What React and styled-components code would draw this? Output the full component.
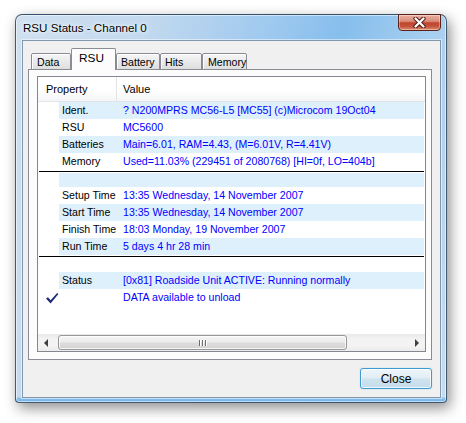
import React from 'react';
import styled, { createGlobalStyle } from 'styled-components';

const GlobalStyle = createGlobalStyle`
  html, body {
    margin: 0;
    background: #ffffff;
  }
  body {
    font-family: "Liberation Sans", Arial, sans-serif;
  }
`;

const Desktop = styled.div`
  width: 466px;
  height: 423px;
  box-sizing: border-box;
  padding: 14px 0 0 15px;
`;

const Window = styled.div`
  width: 432px;
  height: 389px;
  box-sizing: border-box;
  display: flex;
  flex-direction: column;
  padding: 0 5px 4px 6px;
  border: 1px solid rgba(38, 56, 76, 0.8);
  border-radius: 7px 7px 4px 4px;
  background:
    linear-gradient(to top, #6cb1ea 0, #8cc2ee 4px, transparent 5px),
    linear-gradient(105deg, #cfe0f0 0%, #c2d9ef 25%, #9fc9ef 48%, #86beec 62%, #a6cef0 78%, #c7dcf0 100%);
  box-shadow: 3px 5px 14px rgba(0, 0, 0, 0.45), inset 0 0 0 1px rgba(255, 255, 255, 0.55);
`;

const TitleBar = styled.div`
  height: 25px;
  display: flex;
  justify-content: space-between;
  align-items: flex-start;
`;

const Title = styled.span`
  padding: 6px 0 0 1px;
  font-size: 11.6px;
  color: #000;
  text-shadow: 0 0 6px #fff, 0 0 3px #fff;
`;

const CaptionClose = styled.div`
  width: 43px;
  height: 17px;
  margin-top: -1px;
  box-sizing: border-box;
  display: flex;
  align-items: center;
  justify-content: center;
  border: 1px solid #5a2219;
  border-radius: 0 0 4px 4px;
  background: linear-gradient(#eab0a2 0%, #d98b79 42%, #c24530 52%, #c4513a 75%, #df8f70 100%);
  box-shadow: inset 0 0 0 1px rgba(255, 255, 255, 0.35);
`;

const Client = styled.div`
  flex: 1;
  display: flex;
  flex-direction: column;
  padding: 8px 8px 8px 5px;
  background: #f0f0f0;
  border: 1px solid #8297ad;
  box-shadow: 0 0 0 1px rgba(255, 255, 255, 0.5);
`;

const TabStrip = styled.div`
  position: relative;
  z-index: 1;
  height: 21px;
  margin-bottom: -1px;
  padding-left: 3px;
  display: flex;
  align-items: flex-end;
`;

const Tab = styled.div`
  width: ${p => p.w}px;
  height: ${p => (p.active ? 22 : 17)}px;
  box-sizing: border-box;
  padding-left: ${p => p.pad}px;
  display: flex;
  align-items: center;
  font-size: ${p => (p.active ? 11.8 : 10.6)}px;
  color: #000;
  white-space: nowrap;
  border: 1px solid #898c95;
  border-bottom: ${p => (p.active ? 'none' : '1px solid #898c95')};
  border-radius: 2px 2px 0 0;
  background: ${p =>
    p.active ? '#fcfcfc' : 'linear-gradient(#f6f6f6, #ebebeb 45%, #dedede)'};
  box-shadow: ${p => (p.active ? 'none' : 'inset 0 1px 0 #fff, inset 1px 0 0 #fff')};
  padding-bottom: ${p => (p.active ? 3 : 0)}px;
`;

const Panel = styled.div`
  height: 291px;
  box-sizing: border-box;
  display: flex;
  flex-direction: column;
  padding: 6px 5px 7px 8px;
  border: 1px solid #898c95;
  background: #fcfcfc;
`;

const ListView = styled.div`
  flex: 1;
  display: flex;
  flex-direction: column;
  border: 1px solid #828790;
  background: #fff;
  font-size: 10.6px;
`;

const Header = styled.div`
  height: 25px;
  box-sizing: border-box;
  display: flex;
  border-bottom: 1px solid #e3e4e6;
  background: linear-gradient(#ffffff 0%, #ffffff 55%, #f4f5f7 100%);
`;

const HeadCell = styled.div`
  width: ${p => (p.w ? `${p.w}px` : 'auto')};
  flex: ${p => (p.w ? 'none' : 1)};
  box-sizing: border-box;
  padding-left: ${p => p.pad}px;
  display: flex;
  align-items: center;
  font-size: 11px;
  color: #000;
  border-right: ${p => (p.w ? '1px solid #e3e4e6' : 'none')};
`;

const Row = styled.div`
  height: 17px;
  display: flex;
  line-height: 17px;
`;

const IconCell = styled.div`
  width: 21px;
  flex: none;
  padding: 3px 0 0 8px;
  box-sizing: border-box;
`;

const Band = styled.div`
  flex: 1;
  display: flex;
  margin-right: 1px;
  background: ${p => (p.striped ? '#dff0fd' : 'transparent')};
`;

const PropCell = styled.span`
  width: 64px;
  flex: none;
  box-sizing: border-box;
  padding-left: 3px;
  color: #000;
  white-space: nowrap;
`;

const ValueCell = styled.span`
  flex: 1;
  color: #0000ff;
  white-space: nowrap;
`;

const SepRow = styled.div`
  height: 17px;
  display: flex;
  flex-direction: column;
`;

const SepLine = styled.div`
  height: 1px;
  margin: 1px;
  background: #000;
`;

const SepBand = styled.div`
  flex: 1;
  margin: 0 1px 0 21px;
  background: ${p => (p.striped ? '#dff0fd' : 'transparent')};
`;

const Spacer = styled.div`
  flex: 1;
`;

const ScrollBar = styled.div`
  height: 17px;
  display: flex;
  align-items: center;
  background: linear-gradient(#e9e9e9, #f3f3f3 30%, #f3f3f3 70%, #ebebeb);
`;

const ArrowButton = styled.div`
  width: 17px;
  height: 17px;
  flex: none;
  display: flex;
  align-items: center;
  justify-content: center;
`;

const Arrow = styled.div`
  width: 0;
  height: 0;
  border-top: 4px solid transparent;
  border-bottom: 4px solid transparent;
  ${p =>
    p.dir === 'left'
      ? 'border-right: 4px solid #3f3f3f; margin-left: -1px;'
      : 'border-left: 4px solid #3f3f3f; margin-left: 1px;'}
`;

const Track = styled.div`
  flex: 1;
  height: 17px;
  display: flex;
  align-items: center;
`;

const Thumb = styled.div`
  width: 289px;
  height: 15px;
  margin-left: 3px;
  box-sizing: border-box;
  display: flex;
  align-items: center;
  justify-content: center;
  gap: 2px;
  border: 1px solid #979797;
  border-radius: 3px;
  background: linear-gradient(#f6f6f6 0%, #ececec 45%, #dcdcdc 55%, #d3d3d3 100%);
  box-shadow: inset 0 0 0 1px rgba(255, 255, 255, 0.8);
`;

const Grip = styled.div`
  width: 1px;
  height: 6px;
  background: #6c6c6c;
  box-shadow: 1px 0 0 #fff;
`;

const ButtonRow = styled.div`
  margin-top: 8px;
  display: flex;
  justify-content: flex-end;
`;

const PushButton = styled.button`
  width: 72px;
  height: 21px;
  padding: 0;
  font-family: "Liberation Sans", Arial, sans-serif;
  font-size: 12px;
  color: #000;
  border: 1px solid #3d9bd0;
  border-radius: 3px;
  background: linear-gradient(#eef5fa 0%, #e1edf5 48%, #cfe3ef 52%, #c4dcec 100%);
  box-shadow: inset 0 0 0 1px rgba(255, 255, 255, 0.75), 0 0 1px rgba(60, 170, 230, 0.6);
`;

const CloseGlyph = () => (
  <svg width="13" height="11" viewBox="0 0 13 11">
    <path d="M2.5 1.5 L10.5 9.5 M10.5 1.5 L2.5 9.5" stroke="#4a1a12" strokeWidth="4.2" strokeLinecap="round" />
    <path d="M2.5 1.5 L10.5 9.5 M10.5 1.5 L2.5 9.5" stroke="#ffffff" strokeWidth="2.3" strokeLinecap="round" />
  </svg>
);

const CheckMark = () => (
  <svg width="13" height="11" viewBox="0 0 13 11">
    <polygon points="0,5.5 2,4.3 4.6,7.2 11.2,0 12.4,1 4.6,10.4" fill="#1c2a78" />
  </svg>
);

const tabs = [
  { label: 'Data', w: 40, pad: 5 },
  { label: 'RSU', w: 45, pad: 7, active: true },
  { label: 'Battery', w: 44, pad: 4 },
  { label: 'Hits', w: 42, pad: 4 },
  { label: 'Memory', w: 45, pad: 5 },
];

const rows = [
  { prop: 'Ident.', value: '? N200MPRS MC56-L5 [MC55] (c)Microcom 19Oct04' },
  { prop: 'RSU', value: 'MC5600' },
  { prop: 'Batteries', value: 'Main=6.01, RAM=4.43, (M=6.01V, R=4.41V)' },
  { prop: 'Memory', value: 'Used=11.03% (229451 of 2080768) [HI=0f, LO=404b]' },
  { sep: true },
  { prop: 'Setup Time', value: '13:35 Wednesday, 14 November 2007' },
  { prop: 'Start Time', value: '13:35 Wednesday, 14 November 2007' },
  { prop: 'Finish Time', value: '18:03 Monday, 19 November 2007' },
  { prop: 'Run Time', value: '5 days 4 hr 28 min' },
  { sep: true },
  { prop: 'Status', value: '[0x81] Roadside Unit ACTIVE: Running normally' },
  { prop: '', value: 'DATA available to unload', check: true },
];

const App = () => {
  return (
    <Desktop>
      <GlobalStyle />
      <Window>
        <TitleBar>
          <Title>RSU Status - Channel 0</Title>
          <CaptionClose>
            <CloseGlyph />
          </CaptionClose>
        </TitleBar>
        <Client>
          <TabStrip>
            {tabs.map(t => (
              <Tab key={t.label} w={t.w} pad={t.pad} active={t.active}>
                {t.label}
              </Tab>
            ))}
          </TabStrip>
          <Panel>
            <ListView>
              <Header>
                <HeadCell w={79} pad={8}>Property</HeadCell>
                <HeadCell pad={6}>Value</HeadCell>
              </Header>
              {rows.map((r, i) =>
                r.sep ? (
                  <SepRow key={i}>
                    <SepLine />
                    <SepBand striped={i % 2 === 0} />
                  </SepRow>
                ) : (
                  <Row key={i}>
                    <IconCell>{r.check && <CheckMark />}</IconCell>
                    <Band striped={i % 2 === 0}>
                      <PropCell>{r.prop}</PropCell>
                      <ValueCell>{r.value}</ValueCell>
                    </Band>
                  </Row>
                )
              )}
              <Spacer />
              <ScrollBar>
                <ArrowButton>
                  <Arrow dir="left" />
                </ArrowButton>
                <Track>
                  <Thumb>
                    <Grip />
                    <Grip />
                    <Grip />
                  </Thumb>
                </Track>
                <ArrowButton>
                  <Arrow dir="right" />
                </ArrowButton>
              </ScrollBar>
            </ListView>
          </Panel>
          <ButtonRow>
            <PushButton>Close</PushButton>
          </ButtonRow>
        </Client>
      </Window>
    </Desktop>
  );
};

export default App;
